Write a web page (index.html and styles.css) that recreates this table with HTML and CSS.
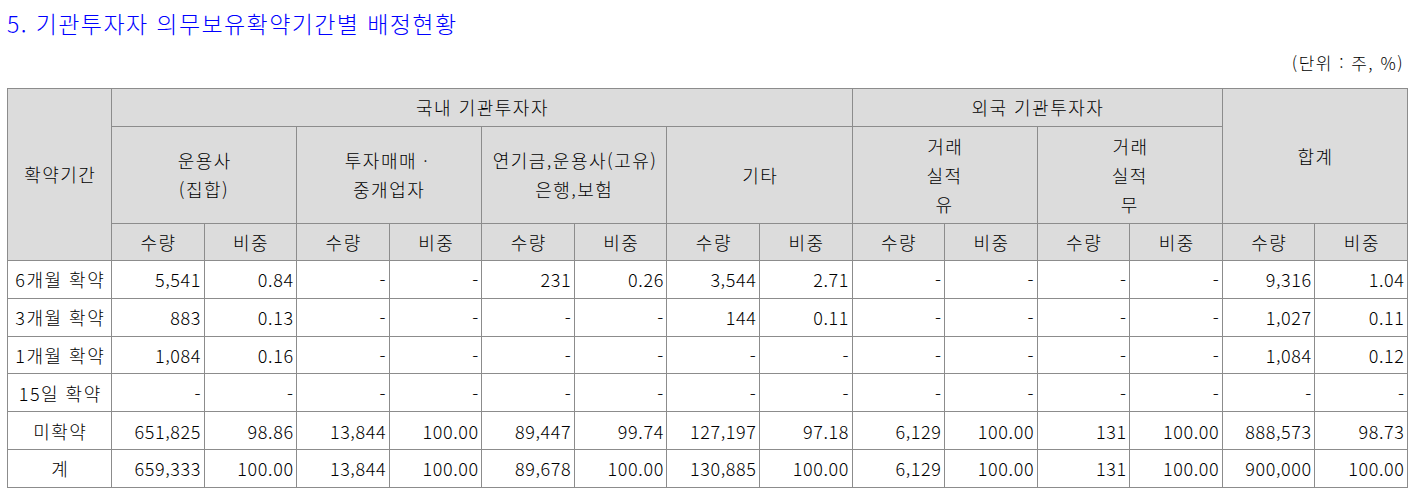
FILE: index.html
```html
<!DOCTYPE html>
<html lang="ko">
<head>
<meta charset="utf-8">
<title>기관투자자 의무보유확약기간별 배정현황</title>
<link rel="stylesheet" href="styles.css">
</head>
<body>
<div class="page">
  <div class="title">5. 기관투자자 의무보유확약기간별 배정현황</div>
  <div class="unit">(단위 : 주, %)</div>
  <table class="grid">
    <colgroup>
      <col class="c-first">
      <col><col><col><col><col><col><col><col><col><col><col><col><col><col>
    </colgroup>
    <thead>
      <tr class="h1">
        <th rowspan="3">확약기간</th>
        <th colspan="8">국내 기관투자자</th>
        <th colspan="4">외국 기관투자자</th>
        <th colspan="2" rowspan="2">합계</th>
      </tr>
      <tr class="h2">
        <th colspan="2">운용사<br>(집합)</th>
        <th colspan="2">투자매매ㆍ<br>중개업자</th>
        <th colspan="2">연기금,운용사(고유)<br>은행,보험</th>
        <th colspan="2">기타</th>
        <th colspan="2">거래<br>실적<br>유</th>
        <th colspan="2">거래<br>실적<br>무</th>
      </tr>
      <tr class="h3">
        <th>수량</th><th>비중</th>
        <th>수량</th><th>비중</th>
        <th>수량</th><th>비중</th>
        <th>수량</th><th>비중</th>
        <th>수량</th><th>비중</th>
        <th>수량</th><th>비중</th>
        <th>수량</th><th>비중</th>
      </tr>
    </thead>
    <tbody>
      <tr>
        <td class="lbl">6개월 확약</td>
        <td>5,541</td><td>0.84</td><td>-</td><td>-</td><td>231</td><td>0.26</td><td>3,544</td><td>2.71</td><td>-</td><td>-</td><td>-</td><td>-</td><td>9,316</td><td>1.04</td>
      </tr>
      <tr>
        <td class="lbl">3개월 확약</td>
        <td>883</td><td>0.13</td><td>-</td><td>-</td><td>-</td><td>-</td><td>144</td><td>0.11</td><td>-</td><td>-</td><td>-</td><td>-</td><td>1,027</td><td>0.11</td>
      </tr>
      <tr>
        <td class="lbl">1개월 확약</td>
        <td>1,084</td><td>0.16</td><td>-</td><td>-</td><td>-</td><td>-</td><td>-</td><td>-</td><td>-</td><td>-</td><td>-</td><td>-</td><td>1,084</td><td>0.12</td>
      </tr>
      <tr>
        <td class="lbl">15일 확약</td>
        <td>-</td><td>-</td><td>-</td><td>-</td><td>-</td><td>-</td><td>-</td><td>-</td><td>-</td><td>-</td><td>-</td><td>-</td><td>-</td><td>-</td>
      </tr>
      <tr>
        <td class="lbl">미확약</td>
        <td>651,825</td><td>98.86</td><td>13,844</td><td>100.00</td><td>89,447</td><td>99.74</td><td>127,197</td><td>97.18</td><td>6,129</td><td>100.00</td><td>131</td><td>100.00</td><td>888,573</td><td>98.73</td>
      </tr>
      <tr>
        <td class="lbl">계</td>
        <td>659,333</td><td>100.00</td><td>13,844</td><td>100.00</td><td>89,678</td><td>100.00</td><td>130,885</td><td>100.00</td><td>6,129</td><td>100.00</td><td>131</td><td>100.00</td><td>900,000</td><td>100.00</td>
      </tr>
    </tbody>
  </table>
</div>
</body>
</html>
```

FILE: styles.css
```css
html, body {
  margin: 0;
  padding: 0;
  background: #ffffff;
}

body {
  font-family: "Noto Sans CJK KR", "Noto Sans", sans-serif;
  color: #000000;
}

.page {
  padding: 0 7px;
}

.title {
  height: 48px;
  line-height: 46px;
  font-size: 23px;
  font-weight: 300;
  letter-spacing: 1.4px;
  color: #0000ff;
  white-space: nowrap;
}

.unit {
  height: 30px;
  line-height: 30px;
  font-size: 17px;
  font-weight: 300;
  letter-spacing: 1.5px;
  text-align: right;
  padding-right: 4px;
}

.grid {
  margin-top: 10px;
  width: 1401px;
  table-layout: fixed;
  border-collapse: collapse;
  border: 1px solid #000000;
  font-size: 18px;
  font-weight: 300;
}

.c-first {
  width: 104px;
}

.grid th,
.grid td {
  border: 1px solid #8c8c8c;
  padding: 0 4px;
  white-space: nowrap;
  vertical-align: middle;
}

.grid th {
  background: #dcdcdc;
  font-weight: 300;
  text-align: center;
  line-height: 29px;
  letter-spacing: 1.5px;
  text-indent: 1.5px;
}

.grid tr.h1 { height: 38px; }
.grid tr.h2 { height: 97px; }
.grid tr.h3 { height: 37px; }

.grid tbody tr { height: 37.8px; }

.grid td {
  text-align: right;
  line-height: 24px;
  letter-spacing: 0.6px;
  padding-right: 2.5px;
}

.grid td.lbl {
  text-align: center;
  letter-spacing: 1.5px;
  text-indent: 1.5px;
  padding: 0 1px;
}
```
